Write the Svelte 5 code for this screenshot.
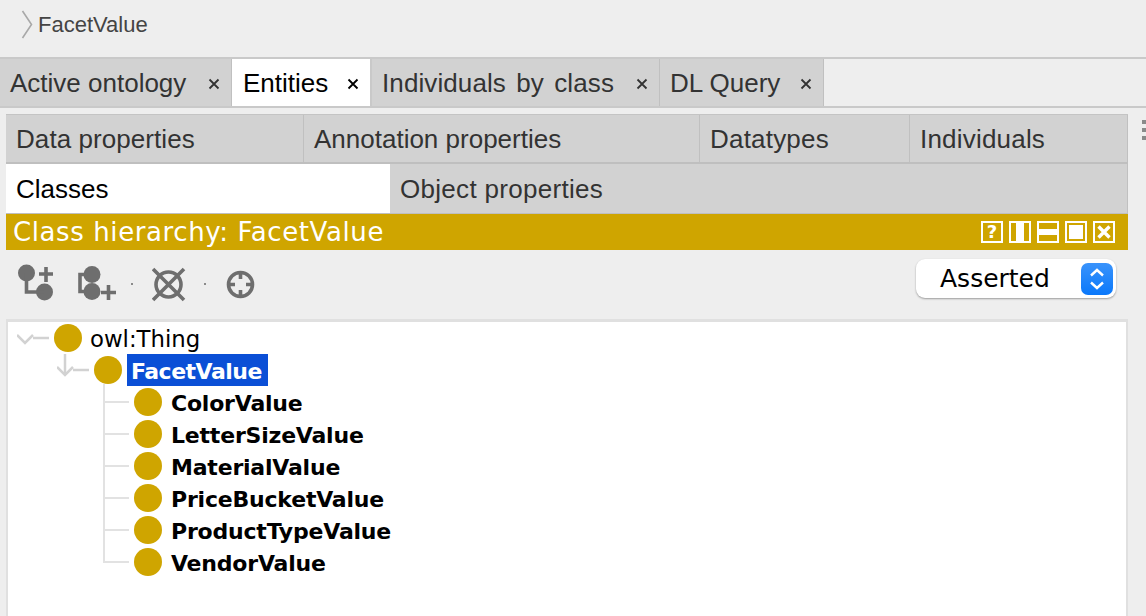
<script>
	const mainTabs = [
		{ name: 'Active ontology', width: 232, wordGap: 0, tracking: 0 },
		{ name: 'Entities', width: 140, active: true, wordGap: 0, tracking: 0 },
		{ name: 'Individuals by class', width: 288, wordGap: 3, tracking: 0.1 },
		{ name: 'DL Query', width: 164, wordGap: 0, tracking: 0 }
	];

	const topEntityTabs = [
		{ name: 'Data properties', width: 298, tracking: 0.07 },
		{ name: 'Annotation properties', width: 396, tracking: 0 },
		{ name: 'Datatypes', width: 210, tracking: 0.2 },
		{ name: 'Individuals', width: 218, tracking: 0.2 }
	];

	const children = [
		'ColorValue',
		'LetterSizeValue',
		'MaterialValue',
		'PriceBucketValue',
		'ProductTypeValue',
		'VendorValue'
	];
</script>

<div class="page">
	<div class="crumbs">
		<svg class="crumb-arrow" width="12" height="30" viewBox="0 0 12 30">
			<path d="M1.5 1 L10.5 14.5 L1.5 28" fill="none" stroke="#a8a8a8" stroke-width="1.6" />
		</svg>
		<span>FacetValue</span>
	</div>

	<div class="main-tabs">
		{#each mainTabs as tab}
			<div class="main-tab" class:active={tab.active} style="width: {tab.width}px">
				<span style="word-spacing: {tab.wordGap}px; letter-spacing: {tab.tracking}px">{tab.name}</span>
				<svg class="close" width="12" height="12" viewBox="0 0 12 12">
					<path d="M1.5 1.5 L10.5 10.5 M10.5 1.5 L1.5 10.5" stroke-width="1.8" />
				</svg>
			</div>
		{/each}
	</div>

	<div class="content">
		<div class="panel">
			<div class="entity-row">
				{#each topEntityTabs as tab}
					<div class="entity-tab" style="width: {tab.width}px; letter-spacing: {tab.tracking}px">{tab.name}</div>
				{/each}
			</div>
			<div class="entity-row second">
				<div class="entity-tab active">Classes</div>
				<div class="entity-tab rest">Object properties</div>
			</div>

			<div class="view-header">
				<span>Class hierarchy: FacetValue</span>
				<div class="view-buttons">
					<div class="view-btn"><b>?</b></div>
					<div class="view-btn"><i class="col"></i></div>
					<div class="view-btn"><i class="bar"></i></div>
					<div class="view-btn"><i class="square"></i></div>
					<div class="view-btn">
						<svg width="16" height="16" viewBox="0 0 16 16">
							<path d="M2.5 2.5 L13.5 13.5 M13.5 2.5 L2.5 13.5" stroke="#fff" stroke-width="3.4" />
						</svg>
					</div>
				</div>
			</div>

			<div class="toolbar">
				<svg class="tool first" width="36" height="40" viewBox="0 0 36 40">
					<circle cx="8.5" cy="9" r="8.5" />
					<circle cx="26.5" cy="28" r="8.5" />
					<path class="line" d="M8.5 9 V28 H26" />
					<path class="line" d="M28 3 V18 M21 10 H35" />
				</svg>
				<svg class="tool second-icon" width="40" height="40" viewBox="0 0 40 40">
					<circle cx="15" cy="10.5" r="8.5" />
					<circle cx="15" cy="27.5" r="8.5" />
					<path class="line" d="M9 10.5 H3 V27.5 H9" />
					<path class="line" d="M31.5 21 V36 M24 28.5 H39" />
				</svg>
				<i class="dot first-dot"></i>
				<svg class="tool third" width="34" height="40" viewBox="0 0 34 40">
					<circle class="line" cx="16.5" cy="20.5" r="12.5" />
					<path class="line" d="M1 5 L32 36 M32 5 L1 36" />
				</svg>
				<i class="dot second-dot"></i>
				<svg class="tool fourth" width="30" height="40" viewBox="0 0 30 40">
					<circle class="line" cx="14.5" cy="20.5" r="12" />
					<path class="line" d="M14.5 8 V15 M14.5 26 V33 M2 20.5 H9 M20 20.5 H27" />
				</svg>

				<div class="select">
					<span>Asserted</span>
					<div class="stepper">
						<svg width="20" height="26" viewBox="0 0 20 26">
							<path d="M4 9.5 L10 4 L16 9.5 M4 16.5 L10 22 L16 16.5" fill="none" stroke="#fff" stroke-width="2.4" />
						</svg>
					</div>
				</div>
			</div>

			<div class="tree">
				<div class="row">
					<svg class="twisty" width="37" height="32" viewBox="0 0 37 32">
						<path d="M0 13 L8 21 L16 13" />
						<path d="M16 16 H32" />
					</svg>
					<i class="node"></i>
					<span class="label">owl:Thing</span>
				</div>
				<div class="row">
					<svg class="twisty level2" width="37" height="32" viewBox="0 0 37 32">
						<path d="M0 13 L8 21 L16 13" />
						<path d="M8 0 V20 M16 16 H32" />
					</svg>
					<i class="node"></i>
					<span class="label selected">FacetValue</span>
				</div>
				<div class="branch">
					{#each children as child}
						<div class="row child">
							<i class="elbow"></i>
							<i class="node"></i>
							<span class="label bold">{child}</span>
						</div>
					{/each}
				</div>
			</div>
		</div>

		<div class="grip"><i></i><i></i><i></i></div>
	</div>
</div>

<style>
	:global(body) {
		margin: 0;
		background: #eeeeee;
	}

	.page {
		width: 1146px;
		height: 616px;
		overflow: hidden;
		background: #eeeeee;
		font-family: 'Liberation Sans', Arial, sans-serif;
		color: #333333;
	}

	.crumbs {
		display: flex;
		align-items: center;
		gap: 5px;
		box-sizing: border-box;
		height: 59px;
		padding: 0 0 7px 21px;
		border-bottom: 2px solid #c9c9c9;
		font-size: 22px;
		color: #444444;
	}

	.main-tabs {
		display: flex;
		box-sizing: border-box;
		height: 49px;
		border-bottom: 2px solid #c9c9c9;
	}

	.main-tab {
		display: flex;
		align-items: center;
		justify-content: space-between;
		box-sizing: border-box;
		padding: 2px 11px 0 10px;
		background: #d2d2d2;
		border-right: 1px solid #c0c0c0;
		font-size: 26px;
		white-space: nowrap;
	}

	.main-tab.active {
		padding-left: 11px;
		background: #ffffff;
		color: #000000;
		border-right: 2px solid #c9c9c9;
	}

	.close {
		margin-top: 1px;
		stroke: #333333;
	}

	.main-tab.active .close {
		stroke: #000000;
	}

	.content {
		display: flex;
		padding: 6px 0 0 6px;
	}

	.panel {
		width: 1122px;
	}

	.entity-row {
		display: flex;
		height: 50px;
		box-sizing: border-box;
		border-bottom: 2px solid #bfbfbf;
		border-top: 1px solid #c4c4c4;
	}

	.entity-row.second {
		border-top: 0;
		border-bottom: 1px solid #bfbfbf;
	}

	.entity-tab {
		display: flex;
		align-items: center;
		box-sizing: border-box;
		padding: 2px 10px 0 10px;
		background: #d2d2d2;
		border-right: 1px solid #c0c0c0;
		font-size: 26px;
	}

	.entity-tab.active {
		width: 384px;
		background: #ffffff;
		color: #000000;
		border-right: 0;
	}

	.entity-tab.rest {
		flex: 1;
		letter-spacing: 0.3px;
	}

	.view-header {
		display: flex;
		align-items: center;
		justify-content: space-between;
		box-sizing: border-box;
		height: 36px;
		padding: 0 13px 0 7px;
		background: #cfa500;
		color: #ffffff;
		font-family: 'DejaVu Sans', Verdana, sans-serif;
		font-size: 26px;
		letter-spacing: 0.6px;
		white-space: nowrap;
	}

	.view-buttons {
		display: flex;
		gap: 6px;
	}

	.view-btn {
		display: flex;
		align-items: center;
		justify-content: center;
		box-sizing: border-box;
		width: 22px;
		height: 22px;
		border: 2px solid #ffffff;
		overflow: hidden;
		letter-spacing: 0;
	}

	.view-btn b {
		font-family: 'DejaVu Sans', sans-serif;
		font-size: 18px;
		line-height: 1;
	}

	.col {
		width: 8px;
		height: 18px;
		background: #ffffff;
	}

	.bar {
		width: 18px;
		height: 6px;
		background: #ffffff;
	}

	.square {
		width: 14px;
		height: 14px;
		background: #ffffff;
	}

	.toolbar {
		display: flex;
		align-items: center;
		height: 69px;
		box-sizing: border-box;
	}

	.tool {
		flex: none;
		margin-bottom: 1px;
		fill: #6e6e6e;
	}

	.first {
		margin-left: 12px;
	}

	.second-icon {
		margin-left: 23px;
	}

	.first-dot {
		margin-left: 14px;
	}

	.third {
		margin-left: 19px;
	}

	.second-dot {
		margin-left: 18px;
	}

	.fourth {
		margin-left: 20px;
	}

	.line {
		fill: none;
		stroke: #6e6e6e;
		stroke-width: 3.6;
	}

	.dot {
		flex: none;
		width: 2px;
		height: 2px;
		margin-bottom: 1px;
		background: #8a8a8a;
	}

	.select {
		display: flex;
		align-items: center;
		justify-content: space-between;
		box-sizing: border-box;
		width: 200px;
		height: 39px;
		margin: 0 12px 12px auto;
		padding: 0 3px 0 24px;
		background: #ffffff;
		border-radius: 9px;
		box-shadow: 0 1px 2px rgba(0, 0, 0, 0.35);
		font-family: 'DejaVu Sans', Verdana, sans-serif;
		font-size: 25px;
		color: #000000;
	}

	.stepper {
		display: flex;
		align-items: center;
		justify-content: center;
		width: 32px;
		height: 32px;
		border-radius: 7px;
		background: linear-gradient(#3a93fb, #0a78fb);
	}

	.tree {
		box-sizing: border-box;
		height: 297px;
		padding: 0 0 0 9px;
		background: #ffffff;
		border: 3px solid #e0e0e0;
		border-width: 3px 2px 0;
		font-family: 'DejaVu Sans', Verdana, sans-serif;
		font-size: 22.8px;
		color: #000000;
	}

	.row {
		display: flex;
		align-items: center;
		height: 32px;
	}

	.twisty {
		flex: none;
		fill: none;
		stroke: #d2d2d2;
		stroke-width: 2.5;
	}

	.twisty.level2 {
		margin-left: 40px;
	}

	.node {
		flex: none;
		width: 28px;
		height: 28px;
		border-radius: 50%;
		background: #cfa500;
	}

	.label {
		height: 32px;
		margin-left: 8px;
		line-height: 35px;
		white-space: nowrap;
	}

	.selected {
		margin-left: 5px;
		padding: 0 6px 0 4px;
		background: #0b4fd6;
		color: #ffffff;
		font-size: 22px;
		font-weight: bold;
		letter-spacing: -0.5px;
	}

	.bold {
		margin-left: 9px;
		line-height: 36px;
		font-size: 22px;
		font-weight: bold;
		letter-spacing: -0.2px;
	}

	.branch {
		margin-left: 86px;
	}

	.child {
		position: relative;
	}

	.elbow {
		flex: none;
		align-self: flex-start;
		box-sizing: border-box;
		width: 26px;
		height: 19px;
		margin: -2px 5px 0 0;
		border-left: 2px solid #e2e2e2;
		border-bottom: 2px solid #e2e2e2;
	}

	.row.child:not(:last-child)::before {
		content: '';
		position: absolute;
		left: 0;
		top: 16px;
		width: 2px;
		height: 16px;
		background: #e2e2e2;
	}

	.grip {
		display: flex;
		flex-direction: column;
		gap: 4px;
		margin: 6px 0 0 14px;
	}

	.grip i {
		width: 4px;
		height: 4px;
		background: #8a8a8a;
	}
</style>
